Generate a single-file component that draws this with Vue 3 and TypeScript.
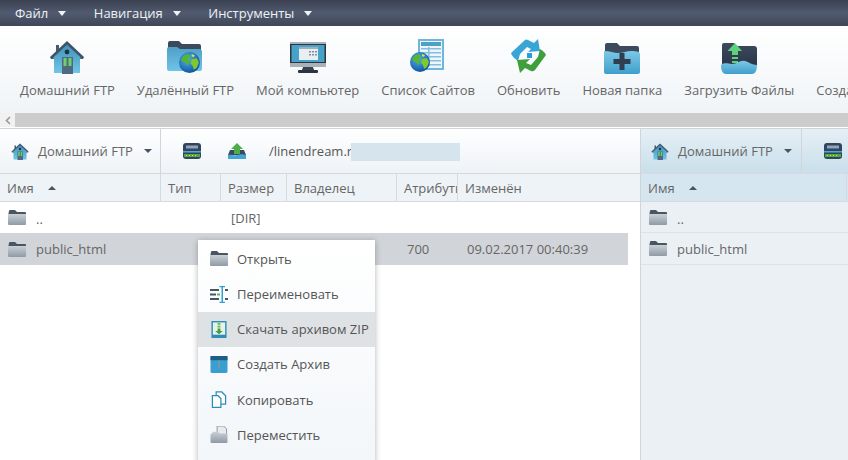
<template>
  <div class="app">
    <svg class="defs" width="0" height="0" aria-hidden="true">
      <defs>
        <linearGradient id="gBlue" x1="0" y1="0" x2="0" y2="1"><stop offset="0" stop-color="#4f9fc6" /><stop offset="1" stop-color="#6fc4e6" /></linearGradient>
        <linearGradient id="gBlue2" x1="0" y1="0" x2="0" y2="1"><stop offset="0" stop-color="#7cc8e6" /><stop offset="1" stop-color="#3f9fcb" /></linearGradient>
        <linearGradient id="gHouse" x1="0" y1="0" x2="0" y2="1"><stop offset="0" stop-color="#3f93bb" /><stop offset="1" stop-color="#72c6e4" /></linearGradient>
        <linearGradient id="gGrey" x1="0" y1="0" x2="0" y2="1"><stop offset="0" stop-color="#c9d0d6" /><stop offset="1" stop-color="#8f9aa5" /></linearGradient>
        <linearGradient id="gDark" x1="0" y1="0" x2="0" y2="1"><stop offset="0" stop-color="#3c4a5e" /><stop offset="1" stop-color="#2a3647" /></linearGradient>
        <radialGradient id="gGlobe" cx="0.4" cy="0.35" r="0.7"><stop offset="0" stop-color="#4fb2ee" /><stop offset="1" stop-color="#0d4f9e" /></radialGradient>
        <symbol id="globe" viewBox="0 0 20 20">
          <circle cx="10" cy="10" r="10" fill="url(#gGlobe)" />
          <path d="M5 3l5-1 1 3-2 2 1 3-2 3-2-3-3-1-1-2z" fill="#58b52f" />
          <path d="M12 7l5-1 2 4-2 5-3 2-1-4-2-2z" fill="#7ec92b" />
          <path d="M12 2l3 1-1 2-2-1z" fill="#d9e24a" />
        </symbol>
        <symbol id="home" viewBox="0 0 34 34">
          <path d="M6 5h3v5l-3 3z" fill="#4b5a6b" />
          <path d="M17 1L34 17 33 19H1L0 17z" fill="#3f5468" />
          <path d="M17 5L31 18 30 19H4L3 18z" fill="#4da8d0" />
          <path d="M4 17L17 5l13 12v16H4z" fill="url(#gHouse)" />
          <circle cx="17" cy="12" r="2.400" fill="#223246" />
          <rect x="12" y="17" width="11" height="17" fill="#4f6a80" />
          <rect x="13.500" y="18" width="3" height="8" fill="#6ed06b" />
          <rect x="18.500" y="18" width="3" height="8" fill="#6ed06b" />
        </symbol>
        <symbol id="folderGlobe" viewBox="0 0 36 36">
          <path d="M1 5a2 2 0 0 1 2-2h9l3 3h17a2 2 0 0 1 2 2v5H1z" fill="#3c4a5e" />
          <path d="M0 11a2 2 0 0 1 2-2h8l3 2h19a3 3 0 0 1 3 3v17a2 2 0 0 1-2 2H2a2 2 0 0 1-2-2z" fill="url(#gBlue)" />
          <use href="#globe" x="12" y="14" width="21" height="21" />
        </symbol>
        <symbol id="monitor" viewBox="0 0 36 32">
          <rect x="0" y="0" width="36" height="25" fill="#aab2b9" />
          <rect x="0" y="2" width="36" height="19" fill="#2c3442" />
          <rect x="1.500" y="3" width="33" height="17" fill="#46a2c8" />
          <rect x="9" y="5" width="19" height="13" fill="#e8eef2" />
          <rect x="9" y="5" width="19" height="2" fill="#9fb0bc" />
          <path d="M19 9h2v1.500h-2zm3 0h2v1.500h-2zm3 0h2v1.500h-2zm-6 3h2v1.500h-2zm3 0h2v1.500h-2zm3 0h2v1.500h-2z" fill="#78909f" />
          <path d="M13 25h10l1 3h-12z" fill="#3a4350" />
          <rect x="8" y="28" width="20" height="3" rx="1" fill="#2c3442" />
        </symbol>
        <symbol id="sites" viewBox="0 0 36 36">
          <rect x="8" y="1" width="26" height="31" fill="#6fb6dc" />
          <rect x="10" y="3" width="22" height="27" fill="#eef6fb" />
          <rect x="11" y="4" width="20" height="4" fill="#4f9fc9" />
          <path d="M11 10h20v1.500H11zm0 4h20v1.500H11zm0 4h20v1.500H11zm0 4h20v1.500H11zm0 4h20v1.500H11z" fill="#83bedf" />
          <path d="M18 9h1.500v19H18z" fill="#83bedf" />
          <use href="#globe" x="0" y="14" width="20" height="20" />
        </symbol>
        <symbol id="refresh" viewBox="0 0 36 36">
          <path d="M0 15L14 2q1-1 3 0l6 3 4-4 2 12-12 1 3-3-4-2-7 7-2 7q-6-4-7-8z" fill="#39a4d6" />
          <path d="M35 17L24 32q-2 2-4 1l-6-3-5 5-3-13 13-1-4 4 5 2 7-8 2-8q5 3 6 6z" fill="#3e9f3c" />
          <rect x="16" y="15" width="5" height="5" fill="#26a0d8" />
        </symbol>
        <symbol id="newFolder" viewBox="0 0 36 32">
          <path d="M1 3a2 2 0 0 1 2-2h10l3 3h17a2 2 0 0 1 2 2v8H1z" fill="#3c4a5e" />
          <path d="M0 9c6 0 10 2 14 2 5 0 9-2 13-2 3 0 9 0 9 3v18a2 2 0 0 1-2 2H2a2 2 0 0 1-2-2z" fill="url(#gBlue2)" />
          <path d="M15.500 11h5v6h6v5h-6v6h-5v-6h-6v-5h6z" fill="#2f3d50" />
        </symbol>
        <symbol id="upload" viewBox="0 0 36 32">
          <path d="M1 3a2 2 0 0 1 2-2h10l3 3h17a3 3 0 0 1 3 3v17H1z" fill="url(#gDark)" />
          <path d="M11 1L18 9h-4v4h-6V9H3.500z" transform="translate(3 0)" fill="#5fd07c" />
          <path d="M11 15h6v2h-6zm0 4h6v2h-6z" fill="#5fd07c" />
          <path d="M0 23c4-3 7-1 11-1 5 0 8-4 13-3 4 1 7 4 12 4 0 6-2 9-5 9H5c-3 0-5-3-5-9z" fill="url(#gBlue2)" />
        </symbol>
        <symbol id="greyFolder" viewBox="0 0 18 15">
          <path d="M1 1a1 1 0 0 1 1-1h5l2 2h8a1 1 0 0 1 1 1v3H0z" fill="#4a5562" />
          <path d="M0 4h18v10a1 1 0 0 1-1 1H1a1 1 0 0 1-1-1z" fill="url(#gGrey)" />
        </symbol>
        <symbol id="drive" viewBox="0 0 18 16">
          <rect x="0" y="0" width="18" height="16" rx="3" fill="#2f4560" />
          <rect x="3" y="2.500" width="12" height="3" fill="#91a5b8" />
          <rect x="0" y="8" width="18" height="1.500" fill="#4fa8d3" />
          <rect x="1" y="11" width="16" height="3" fill="#56a63f" />
          <path d="M3 12h1v1H3zm3 0h1v1H6zm3 0h1v1H9zm3 0h1v1h-1z" fill="#d3e857" />
        </symbol>
        <symbol id="smallUpload" viewBox="0 0 18 16">
          <path d="M2 7h14l2 5H0z" fill="#3a4a5e" />
          <path d="M9 0l6 6h-3v5H6V6H3z" fill="#4ead4b" />
          <path d="M0 12c3-1 5 1 9 0s6-1 9 0v4H0z" fill="#46a5d0" />
        </symbol>
        <symbol id="rename" viewBox="0 0 18 17">
          <path d="M0 3h9v2H0zm0 9h9v2H0z" fill="#4a5562" />
          <path d="M0 7.500h6v2H0z" fill="#4a5562" />
          <path d="M7 7.500h3v2H7z" fill="#5cb85c" />
          <path d="M15 3h3v2h-3zm0 9h3v2h-3z" fill="#4a5562" />
          <path d="M11.500 0h1.500v17h-1.500z" fill="#2f9fd0" />
          <path d="M9.500 0h5.500v1.300H9.500zm0 15.700h5.500V17H9.500z" fill="#2f9fd0" />
        </symbol>
        <symbol id="zip" viewBox="0 0 16 18">
          <rect x="0" y="0" width="16" height="18" fill="#2d8db8" />
          <rect x="1.500" y="1.500" width="13" height="13" fill="#e7f1e6" />
          <path d="M6.500 2h3v2h-3zm0 3h3v2h-3z" fill="#5cb85c" />
          <path d="M6.500 8h3v2.500h2.500L8 14 4 10.500h2.500z" fill="#3f9f3c" />
        </symbol>
        <symbol id="archive" viewBox="0 0 16 16">
          <rect width="16" height="16" rx="1.500" fill="#3a9fd0" />
          <rect width="16" height="4" fill="#1c5f88" />
          <path d="M7.300 4h1.400v8H7.300z" fill="#7d97a8" />
        </symbol>
        <symbol id="copy" viewBox="0 0 16 18">
          <path d="M5 1h6l4 4v9H5z" fill="#fff" stroke="#2d8db8" stroke-width="1.300" />
          <path d="M1 5h6l3 3v9.300H1z" fill="#fff" stroke="#2d8db8" stroke-width="1.300" />
        </symbol>
        <symbol id="move" viewBox="0 0 18 18">
          <path d="M7 0h7l3 3v8H7z" fill="#e7ebef" stroke="#8a96a2" />
          <path d="M0 9l3-3h5l2 2h8v9a1 1 0 0 1-1 1H1a1 1 0 0 1-1-1z" fill="url(#gGrey)" />
        </symbol>
      </defs>
    </svg>

    <nav class="menubar">
      <div v-for="m in menus" :key="m" class="menu-item">
        <span>{{ m }}</span><i class="caret light"></i>
      </div>
    </nav>

    <div class="toolbar">
      <div v-for="t in tools" :key="t.label" class="tool">
        <div class="icon-box">
          <svg :style="{ width: t.w + 'px', height: t.h + 'px' }"><use :href="'#' + t.icon" /></svg>
        </div>
        <span>{{ t.label }}</span>
      </div>
    </div>

    <div class="scrollbar">
      <div class="scroll-btn">
        <svg width="6" height="9" viewBox="0 0 6 9"><path d="M5 1L1.500 4.500 5 8" fill="none" stroke="#9a9a9a" stroke-width="1.600" /></svg>
      </div>
      <div class="scroll-track"></div>
    </div>

    <main class="panels">
      <section class="panel left">
        <div class="panel-bar">
          <div class="site-select">
            <svg class="site-icon"><use href="#home" /></svg>
            <span>Домашний FTP</span><i class="caret"></i>
          </div>
          <div class="bar-tools">
            <svg class="bar-icon"><use href="#drive" /></svg>
            <svg class="bar-icon up"><use href="#smallUpload" /></svg>
            <span class="path">/linendream.r</span><span class="hidden-part"></span>
          </div>
        </div>
        <div class="head-row cols">
          <div v-for="(c, i) in columns" :key="c" class="head-cell">
            <span>{{ c }}</span><i v-if="i === 0" class="caret up-caret"></i>
          </div>
        </div>
        <div class="file-row parent-row cols">
          <div class="name-cell"><svg class="folder"><use href="#greyFolder" /></svg><span class="dots">..</span></div>
          <div></div>
          <div class="cell">[DIR]</div>
        </div>
        <div class="file-row cols selected">
          <div class="name-cell"><svg class="folder"><use href="#greyFolder" /></svg><span>public_html</span></div>
          <div></div><div></div><div></div>
          <div class="cell">700</div>
          <div class="cell date">09.02.2017 00:40:39</div>
        </div>
      </section>

      <section class="panel right">
        <div class="panel-bar">
          <div class="site-select">
            <svg class="site-icon"><use href="#home" /></svg>
            <span>Домашний FTP</span><i class="caret"></i>
          </div>
          <div class="bar-tools">
            <svg class="bar-icon"><use href="#drive" /></svg>
          </div>
        </div>
        <div class="head-row">
          <div class="head-cell"><span>Имя</span><i class="caret up-caret"></i></div>
        </div>
        <div class="file-row parent-row">
          <div class="name-cell"><svg class="folder"><use href="#greyFolder" /></svg><span class="dots">..</span></div>
        </div>
        <div class="file-row">
          <div class="name-cell"><svg class="folder"><use href="#greyFolder" /></svg><span>public_html</span></div>
        </div>
      </section>
    </main>

    <ul class="context-menu">
      <li v-for="c in contextItems" :key="c.label" :class="{ active: c.active }">
        <svg class="ctx-icon"><use :href="'#' + c.icon" /></svg>
        <span>{{ c.label }}</span>
      </li>
    </ul>
  </div>
</template>

<script setup lang="ts">
const menus = ['Файл', 'Навигация', 'Инструменты']

const tools = [
  { label: 'Домашний FTP', icon: 'home', w: 34, h: 34 },
  { label: 'Удалённый FTP', icon: 'folderGlobe', w: 36, h: 36 },
  { label: 'Мой компьютер', icon: 'monitor', w: 36, h: 32 },
  { label: 'Список Сайтов', icon: 'sites', w: 36, h: 36 },
  { label: 'Обновить', icon: 'refresh', w: 36, h: 36 },
  { label: 'Новая папка', icon: 'newFolder', w: 36, h: 32 },
  { label: 'Загрузить Файлы', icon: 'upload', w: 36, h: 32 },
  { label: 'Создать Архив', icon: 'archive', w: 24, h: 24 }
]

const columns = ['Имя', 'Тип', 'Размер', 'Владелец', 'Атрибуты', 'Изменён']

const contextItems = [
  { label: 'Открыть', icon: 'greyFolder' },
  { label: 'Переименовать', icon: 'rename' },
  { label: 'Скачать архивом ZIP', icon: 'zip', active: true },
  { label: 'Создать Архив', icon: 'archive' },
  { label: 'Копировать', icon: 'copy' },
  { label: 'Переместить', icon: 'move' }
]
</script>

<style>
html, body {
  margin: 0;
  overflow: hidden;
}
</style>

<style scoped>
.app {
  position: relative;
  width: 848px;
  height: 460px;
  overflow: hidden;
  background: #fff;
  font-family: "Open Sans", "Noto Sans", sans-serif;
  font-size: 13px;
  color: #666;
}

.defs {
  position: absolute;
}

.caret {
  display: inline-block;
  width: 0;
  height: 0;
  border-left: 5px solid transparent;
  border-right: 5px solid transparent;
  border-top: 5px solid #4a5562;
}

.caret.light {
  border-left-width: 4.5px;
  border-right-width: 4.5px;
  border-top-color: #f0f3f6;
}

.up-caret {
  border-top: 0;
  border-left-width: 4px;
  border-right-width: 4px;
  border-bottom: 4px solid #4a5562;
}

.menubar {
  display: flex;
  height: 26px;
  padding-left: 15px;
  gap: 27.5px;
  align-items: center;
  box-sizing: border-box;
  background: linear-gradient(#3a4050, #515b70 50%, #3f4657);
  color: #eef1f5;
}

.menu-item {
  display: flex;
  align-items: center;
  gap: 10px;
}

.toolbar {
  display: flex;
  height: 87px;
  padding-left: 20px;
  gap: 22px;
  box-sizing: border-box;
  background: linear-gradient(#fff, #f0f4f7);
  white-space: nowrap;
}

.tool {
  display: flex;
  flex-direction: column;
  align-items: center;
  flex: none;
}

.icon-box {
  display: flex;
  height: 48px;
  align-items: flex-end;
  padding-bottom: 1px;
}

.icon-box svg {
  display: block;
}

.tool span {
  margin-top: 6px;
  line-height: 18px;
}

.scrollbar {
  display: flex;
  height: 14px;
}

.scroll-btn {
  display: flex;
  width: 15px;
  align-items: center;
  justify-content: center;
  background: #f1f1f1;
}

.scroll-track {
  flex: 1;
  background: #ccc;
}

.panels {
  display: flex;
  height: 333px;
  margin-top: 1px;
  border-top: 1px solid #d0d4d8;
}

.panel {
  display: flex;
  flex-direction: column;
}

.left {
  width: 640px;
  background: #fff;
}

.right {
  flex: 1;
  border-left: 1px solid #d0d5da;
  background: #ebf0f5;
}

.panel-bar {
  display: flex;
  height: 45px;
  flex: none;
  box-sizing: border-box;
  border-bottom: 1px solid #d6dade;
  background: linear-gradient(#fff, #eef3f7);
}

.right .panel-bar {
  background: linear-gradient(#e6eff5, #c9dfeb);
}

.site-select {
  display: flex;
  width: 161px;
  flex: none;
  align-items: center;
  box-sizing: border-box;
  padding-left: 11px;
  border-right: 1px solid #d0d5da;
}

.right .site-select {
  padding-left: 10px;
}

.site-icon {
  width: 18px;
  height: 17px;
  margin-right: 9px;
}

.site-select .caret {
  margin-left: 11px;
  border-left-width: 4px;
  border-right-width: 4px;
  border-top-width: 4px;
}

.bar-tools {
  display: flex;
  align-items: center;
  padding-left: 22px;
}

.bar-icon {
  width: 18px;
  height: 16px;
}

.bar-icon.up {
  margin-left: 27px;
}

.path {
  width: 82px;
  margin-left: 23px;
  overflow: hidden;
  white-space: nowrap;
  color: #555;
}

.hidden-part {
  width: 109px;
  height: 18px;
  margin-top: 1px;
  background: #d5e4ed;
}

.head-row {
  display: flex;
  height: 28px;
  flex: none;
  box-sizing: border-box;
  border-bottom: 1px solid #d6dade;
  background: #eef3f7;
}

.right .head-row {
  background: #d6e6f0;
}

.head-row.cols,
.file-row.cols {
  display: grid;
  grid-template-columns: 161px 60px 66px 110px 61px 1fr;
}

.head-cell {
  display: flex;
  align-items: center;
  gap: 14px;
  padding-left: 7px;
  overflow: hidden;
  white-space: nowrap;
  border-right: 1px solid #d6dade;
}

.right .head-cell {
  width: 206px;
  box-sizing: border-box;
}

.head-cell:last-child {
  border-right: 0;
}

.right .head-cell:last-child {
  border-right: 1px solid #d6dade;
}

.file-row {
  display: flex;
  height: 32px;
  flex: none;
  align-items: center;
}

.file-row.parent-row {
  height: 31px;
}

.right .file-row {
  border-bottom: 1px solid #dde2e7;
  box-sizing: border-box;
}

.file-row.selected {
  width: 628px;
  background: #d1d5d9;
}

.name-cell {
  display: flex;
  align-items: center;
  padding-left: 8px;
}

.folder {
  width: 18px;
  height: 15px;
  margin-right: 10px;
}

.dots {
  margin-top: 3px;
}

.cell {
  padding-left: 10px;
  white-space: nowrap;
}

.cell.date {
  padding-left: 9px;
}

.context-menu {
  position: absolute;
  top: 240px;
  left: 198px;
  width: 177px;
  height: 230px;
  margin: 0;
  padding: 1.3px 0 0;
  list-style: none;
  background: linear-gradient(#fff, #f2f6f9);
  box-shadow: 0 1px 6px rgba(0, 0, 0, 0.3);
  color: #555;
}

.context-menu li {
  display: flex;
  height: 35.2px;
  align-items: center;
  padding-left: 12px;
  white-space: nowrap;
}

.context-menu li.active {
  background: #dfe2e5;
}

.ctx-icon {
  width: 18px;
  height: 17px;
  margin-right: 9px;
}
</style>
